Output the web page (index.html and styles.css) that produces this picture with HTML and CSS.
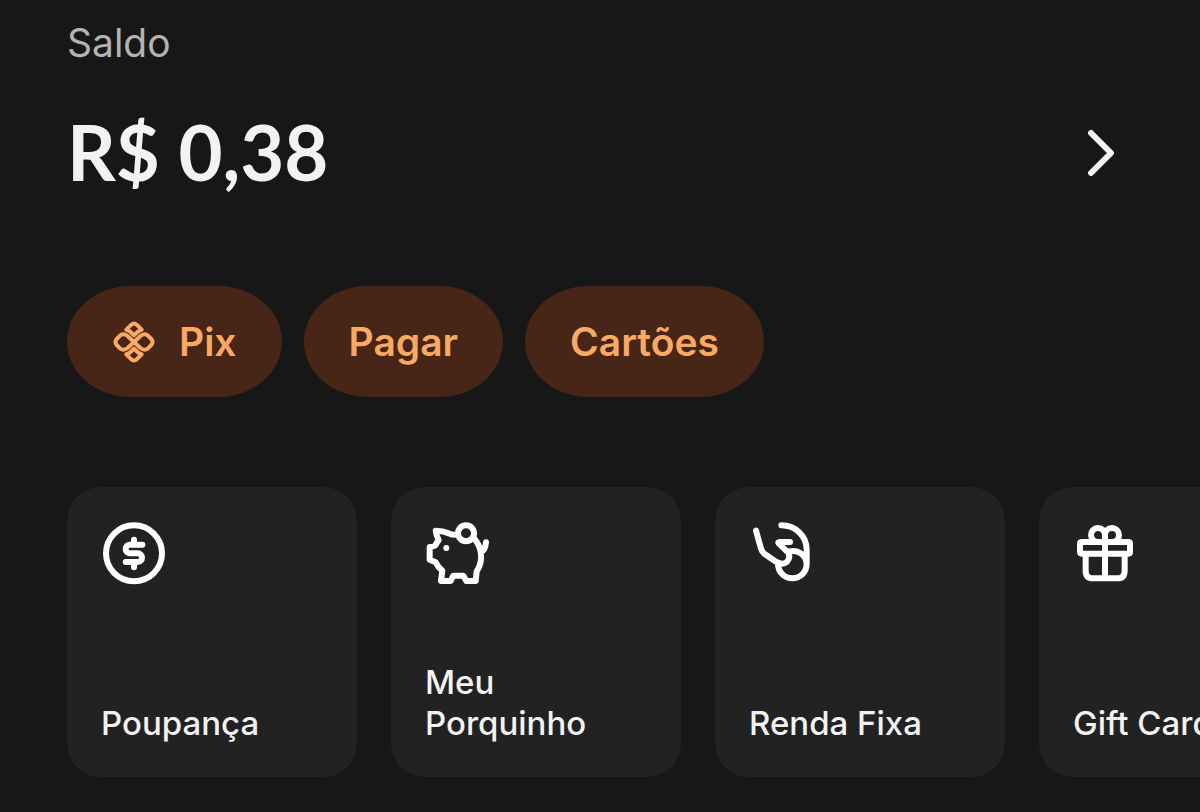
FILE: index.html
```html
<!DOCTYPE html>
<html lang="pt-BR">
<head>
<meta charset="utf-8">
<meta name="viewport" content="width=device-width, initial-scale=1">
<title>Saldo</title>
<link rel="stylesheet" href="styles.css">
</head>
<body>
<main class="wallet">
  <section class="balance">
    <h1 class="balance-label">Saldo</h1>
    <div class="balance-row">
      <p class="balance-amount">R$ 0,38</p>
      <button class="balance-open" type="button" aria-label="Ver saldo">
        <svg class="chevron" viewBox="0 0 32 48" aria-hidden="true"><path d="M5 5 25 25 5 45"/></svg>
      </button>
    </div>
  </section>

  <nav class="actions" aria-label="Ações">
    <button class="pill" type="button">
      <svg class="pix" viewBox="6 6 132 132" aria-hidden="true">
        <path d="M72 52 59 40Q54 36 49 35L64 20Q72 13 80 20L95 35Q90 36 85 40Z"/>
        <path d="M72 92 59 104Q54 108 49 109L64 124Q72 131 80 124L95 109Q90 108 85 104Z"/>
        <path d="M72 72 53 54Q41 45 31 52L20 63Q13 72 20 81L31 92Q41 99 53 90Z"/>
        <path d="M72 72 91 54Q103 45 113 52L124 63Q131 72 124 81L113 92Q103 99 91 90Z"/>
      </svg>
      Pix
    </button>
    <button class="pill" type="button">Pagar</button>
    <button class="pill" type="button">Cartões</button>
  </nav>

  <section class="products" aria-label="Produtos">
    <button class="card" type="button">
      <svg class="icon" viewBox="33 30 198 198" aria-hidden="true">
        <circle cx="132" cy="130" r="84"/>
        <path d="M132 89V103M132 159V172M157 104H120A13 13 0 0 0 120 130H143A13 13 0 0 1 143 156H107"/>
      </svg>
      <span class="card-label">Poupança</span>
    </button>
    <button class="card" type="button">
      <svg class="icon" viewBox="39 36 198 198" aria-hidden="true">
        <circle cx="162" cy="76" r="24"/>
        <path d="M136 79Q121 82 110 76Q92 68 71 68Q73 83 80 96L69 113L53 117V155L71 163Q79 179 91 188L87 219H116L124 203H154L163 219H191L194 190Q212 163 206 132Q203 111 187 92M206 133Q220 127 222 103"/>
        <circle class="solid" cx="103" cy="120" r="9"/>
      </svg>
      <span class="card-label">Meu Porquinho</span>
    </button>
    <button class="card" type="button">
      <svg class="icon" viewBox="33 36 198 198" aria-hidden="true">
        <path d="M54 68 69 122Q72 132 80 138L112 160Q132 174 147 161Q159 148 150 133L122 106Q119 102 125 102H156M130 52C174 52 206 86 206 124V168A43 43 0 0 1 120 168M154 130C181 124 205 142 206 169"/>
      </svg>
      <span class="card-label">Renda Fixa</span>
    </button>
    <button class="card" type="button">
      <svg class="icon" viewBox="39 36 198 198" aria-hidden="true">
        <path d="M66 102H205Q210 102 210 107V132Q210 137 205 137H66Q60 137 60 132V107Q60 102 66 102ZM77 137V188Q77 211 99 211H172Q194 211 194 188V137M135 102V211M135 102H115A21 21 0 1 1 135 81ZM135 102H156A21 21 0 1 0 135 81Z"/>
      </svg>
      <span class="card-label">Gift Card</span>
    </button>
  </section>
</main>
</body>
</html>
```
FILE: styles.css
```css
* {
  box-sizing: border-box;
}

body {
  margin: 0;
  background: #171717;
  color: #f2f2f2;
  font-family: Inter, "Liberation Sans", sans-serif;
  overflow-x: hidden;
}

button {
  border: 0;
  margin: 0;
  color: inherit;
  font: inherit;
  cursor: pointer;
}

.wallet {
  padding: 19px 0 36px 67px;
}

.balance {
  padding-right: 82px;
}

.balance-label {
  margin: 0;
  color: #b3b3b3;
  font-size: 39px;
  font-weight: 400;
  line-height: 48px;
}

.balance-row {
  display: flex;
  align-items: center;
  justify-content: space-between;
  margin-top: 36px;
}

.balance-amount {
  margin: 0;
  font-family: Lato, "Open Sans", sans-serif;
  font-size: 76px;
  font-weight: 700;
  line-height: 98px;
}

.balance-open {
  display: flex;
  padding: 0;
  background: none;
}

.chevron {
  width: 32px;
  height: 48px;
  fill: none;
  stroke: #f2f2f2;
  stroke-width: 6;
  stroke-linecap: round;
  stroke-linejoin: round;
}

.actions {
  display: flex;
  gap: 22px;
  margin-top: 85px;
}

.pill {
  display: flex;
  align-items: center;
  gap: 23px;
  height: 111px;
  padding: 0 45px;
  border-radius: 64px / 56px;
  background: #472617;
  color: #f9a963;
  font-size: 39px;
  font-weight: 600;
  line-height: 48px;
}

.pix {
  width: 44px;
  height: 44px;
  fill: none;
  stroke: currentColor;
  stroke-width: 12;
  stroke-linejoin: round;
}

.products {
  display: flex;
  gap: 34px;
  margin-top: 90px;
  overflow: hidden;
}

.card {
  display: flex;
  flex: 0 0 290px;
  flex-direction: column;
  align-items: flex-start;
  justify-content: space-between;
  aspect-ratio: 1;
  padding: 33px 34px;
  border-radius: 34px;
  background: #222222;
  text-align: left;
}

.icon {
  width: 66px;
  height: 66px;
  fill: none;
  stroke: #ffffff;
  stroke-width: 18;
  stroke-linecap: round;
  stroke-linejoin: round;
}

.icon .solid {
  fill: #ffffff;
  stroke: none;
}

.card-label {
  font-size: 33px;
  font-weight: 500;
  line-height: 41px;
}
```
